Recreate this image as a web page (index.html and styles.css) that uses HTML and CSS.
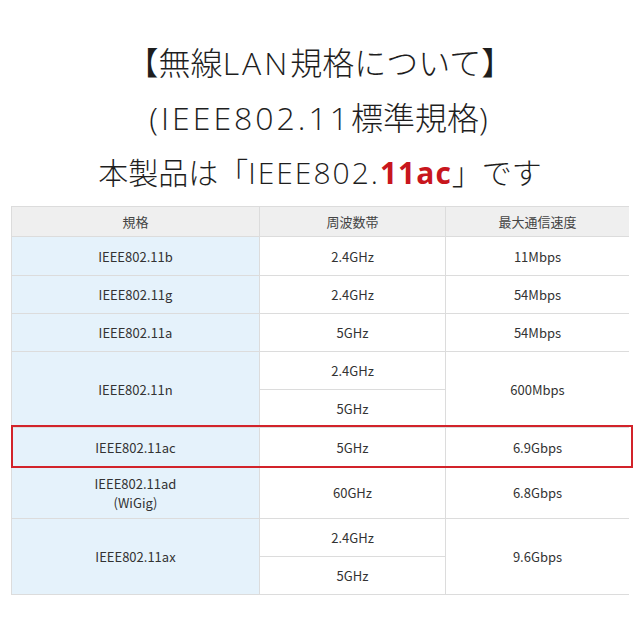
FILE: index.html
```html
<!DOCTYPE html>
<html lang="ja">
<head>
<meta charset="utf-8">
<link rel="stylesheet" href="styles.css">
</head>
<body>
<div class="page">
  <div class="heading">
    <div class="line">【無線<span class="lat">LAN</span>規格について】</div>
    <div class="line"><span class="lat">(IEEE802.11</span>標準規格<span class="lat">)</span></div>
    <div class="line small">本製品は「<span class="lat">IEEE802.</span><span class="accent">11ac</span>」です</div>
  </div>
  <div class="spec">
    <div class="cell head c1 r-h">規格</div>
    <div class="cell head c2 r-h">周波数帯</div>
    <div class="cell head c3 r-h">最大通信速度</div>

    <div class="cell std c1 r-b">IEEE802.11b</div>
    <div class="cell c2 r-b">2.4GHz</div>
    <div class="cell c3 r-b">11Mbps</div>

    <div class="cell std c1 r-g">IEEE802.11g</div>
    <div class="cell c2 r-g">2.4GHz</div>
    <div class="cell c3 r-g">54Mbps</div>

    <div class="cell std c1 r-a">IEEE802.11a</div>
    <div class="cell c2 r-a">5GHz</div>
    <div class="cell c3 r-a">54Mbps</div>

    <div class="cell std c1 r-n">IEEE802.11n</div>
    <div class="cell c2 r-n1">2.4GHz</div>
    <div class="cell c2 r-n2">5GHz</div>
    <div class="cell c3 r-n">600Mbps</div>

    <div class="cell std c1 r-ac">IEEE802.11ac</div>
    <div class="cell c2 r-ac">5GHz</div>
    <div class="cell c3 r-ac">6.9Gbps</div>
    <div class="highlight"></div>

    <div class="cell std c1 r-ad">IEEE802.11ad<br>(WiGig)</div>
    <div class="cell c2 r-ad">60GHz</div>
    <div class="cell c3 r-ad">6.8Gbps</div>

    <div class="cell std c1 r-ax">IEEE802.11ax</div>
    <div class="cell c2 r-ax1">2.4GHz</div>
    <div class="cell c2 r-ax2">5GHz</div>
    <div class="cell c3 r-ax">9.6Gbps</div>
  </div>
</div>
</body>
</html>
```
FILE: styles.css
```css
html, body {
  margin: 0;
  padding: 0;
  background: #ffffff;
}

.page {
  width: 640px;
  height: 640px;
  font-family: "Noto Sans CJK JP", "Noto Sans", sans-serif;
  color: #222;
}

.heading {
  padding-top: 34px;
  margin-bottom: 7px;
  text-align: center;
}

.line {
  height: 55px;
  line-height: 55px;
  font-size: 32px;
  font-weight: 300;
  color: #1e1e1e;
  white-space: nowrap;
  font-family: "Noto Sans CJK JP", sans-serif;
}

.lat {
  font-family: "Open Sans", "Noto Sans", sans-serif;
  font-weight: 300;
  letter-spacing: 3px;
}

.small {
  font-size: 30px;
}

.small .lat {
  letter-spacing: 2px;
}

.accent {
  font-family: "Open Sans", "Noto Sans", sans-serif;
  color: #c8161d;
  font-weight: 700;
  letter-spacing: 1px;
}

.spec {
  margin-left: 11px;
  width: 618px;
  display: grid;
  grid-template-columns: 247px 185px 183px;
  grid-template-rows: 29px 38px 37px 37px 37px 37px 38px 51px 37px 37px;
  gap: 1px;
  background: #dcdcdc;
  border: 1px solid #dcdcdc;
  box-sizing: border-box;
  font-size: 13px;
  color: #333;
}

.cell {
  background: #fff;
  display: flex;
  align-items: center;
  justify-content: center;
  text-align: center;
  line-height: 19px;
}

.head {
  background: #efefef;
  color: #444;
}

.std {
  background: #e5f2fb;
}

.c1 { grid-column: 1; }
.c2 { grid-column: 2; }
.c3 { grid-column: 3; }

.r-h { grid-row: 1; }
.r-b { grid-row: 2; }
.r-g { grid-row: 3; }
.r-a { grid-row: 4; }
.r-n { grid-row: 5 / 7; }
.r-n1 { grid-row: 5; }
.r-n2 { grid-row: 6; }
.r-ac { grid-row: 7; }
.r-ad { grid-row: 8; }
.r-ax { grid-row: 9 / 11; }
.r-ax1 { grid-row: 9; }
.r-ax2 { grid-row: 10; }

.highlight {
  grid-row: 7;
  grid-column: 1 / 4;
  border: 2px solid #d2232a;
  margin: -3px -4px -2px -1px;
  pointer-events: none;
  z-index: 1;
}
```
